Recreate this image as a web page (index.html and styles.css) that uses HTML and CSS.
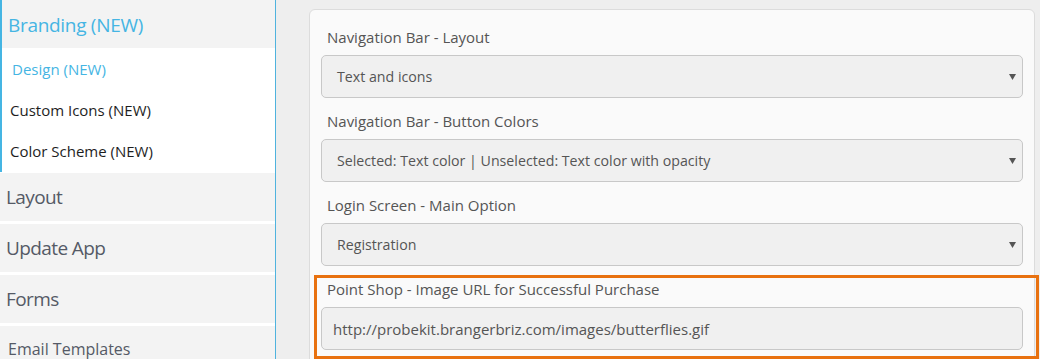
FILE: index.html
```html
<!DOCTYPE html>
<html>
<head>
<meta charset="utf-8">
<link rel="stylesheet" href="styles.css">
</head>
<body>
<div class="page">
  <aside class="sidebar">
    <div class="nav-head">Branding (NEW)</div>
    <div class="submenu">
      <div class="sub-item active">Design (NEW)</div>
      <div class="sub-item">Custom Icons (NEW)</div>
      <div class="sub-item last">Color Scheme (NEW)</div>
    </div>
    <div class="nav-item first">Layout</div>
    <div class="nav-item">Update App</div>
    <div class="nav-item">Forms</div>
    <div class="nav-item small">Email Templates</div>
  </aside>
  <main class="main">
    <div class="card">
      <div class="group">
        <div class="label">Navigation Bar - Layout</div>
        <div class="select"><span>Text and icons</span><svg class="caret" width="7" height="6" viewBox="0 0 7 6"><path d="M0 0H7L3.5 6Z" fill="#555"/></svg></div>
      </div>
      <div class="group">
        <div class="label">Navigation Bar - Button Colors</div>
        <div class="select"><span>Selected: Text color | Unselected: Text color with opacity</span><svg class="caret" width="7" height="6" viewBox="0 0 7 6"><path d="M0 0H7L3.5 6Z" fill="#555"/></svg></div>
      </div>
      <div class="group">
        <div class="label">Login Screen - Main Option</div>
        <div class="select"><span>Registration</span><svg class="caret" width="7" height="6" viewBox="0 0 7 6"><path d="M0 0H7L3.5 6Z" fill="#555"/></svg></div>
      </div>
      <div class="group highlight">
        <div class="label">Point Shop - Image URL for Successful Purchase</div>
        <div class="select input"><span>http://probekit.brangerbriz.com/images/butterflies.gif</span></div>
      </div>
    </div>
  </main>
</div>
</body>
</html>
```

FILE: styles.css
```css
* { box-sizing: border-box; }
html, body { margin: 0; padding: 0; }
body {
  background: #eeeeee;
  font-family: "Open Sans", "DejaVu Sans", sans-serif;
  color: #555;
  overflow: hidden;
}
.page {
  display: flex;
  height: 359px;
  overflow: hidden;
}
.sidebar {
  width: 276px;
  flex: none;
  background: #ffffff;
  border-right: 1px solid #4fb3de;
  display: flex;
  flex-direction: column;
}
.sidebar > * { flex: none; }
.nav-head {
  height: 48px;
  background: #f3f3f3;
  border-left: 2px solid #45b5e3;
  padding-left: 6px;
  padding-top: 2px;
  display: flex;
  align-items: center;
  font-size: 19px;
  color: #45b5e3;
  letter-spacing: -0.3px;
}
.submenu {
  border-left: 2px solid #45b5e3;
  background: #fff;
}
.sub-item {
  height: 40px;
  display: flex;
  align-items: center;
  padding-left: 8px;
  font-size: 15px;
  color: #1e1e1e;
}
.sub-item.active {
  height: 42px;
  border-left: 2px solid #45b5e3;
  margin-left: -2px;
  padding-left: 10px;
  color: #45b5e3;
}
.sub-item.last { height: 42px; }
.nav-item {
  height: 48px;
  margin-top: 3px;
  background: #f3f3f3;
  display: flex;
  align-items: center;
  padding-left: 6px;
  font-size: 19px;
  color: #555a66;
  letter-spacing: -0.6px;
}
.nav-item.first { margin-top: 1px; }
.nav-item.small {
  font-size: 16px;
  padding-left: 8px;
  align-items: flex-start;
  padding-top: 12px;
  letter-spacing: 0;
}
.main {
  flex: 1;
  padding: 9px 0 0 33px;
}
.card {
  width: 726px;
  height: 400px;
  background: #fafafa;
  border: 1px solid #dcdcdc;
  border-radius: 6px;
  padding: 17px 11px 0 11px;
}
.group {
  margin-bottom: 13px;
  position: relative;
}
.label {
  height: 20px;
  line-height: 20px;
  padding-left: 6px;
  font-size: 15px;
  color: #555;
  margin-bottom: 8px;
}
.select {
  height: 43px;
  background: #f0f0f0;
  border: 1px solid #c8c8c8;
  border-radius: 5px;
  display: flex;
  align-items: center;
  justify-content: space-between;
  padding: 0 6px 0 15px;
  font-size: 14.2px;
  color: #555;
}
.select.input {
  font-size: 15px;
  padding-left: 11px;
}
.caret { flex: none; margin-top: 1px; }
.highlight::after {
  content: "";
  position: absolute;
  left: -7px;
  right: -16px;
  top: -4px;
  bottom: -9px;
  border: 3px solid #e8710f;
}
```
